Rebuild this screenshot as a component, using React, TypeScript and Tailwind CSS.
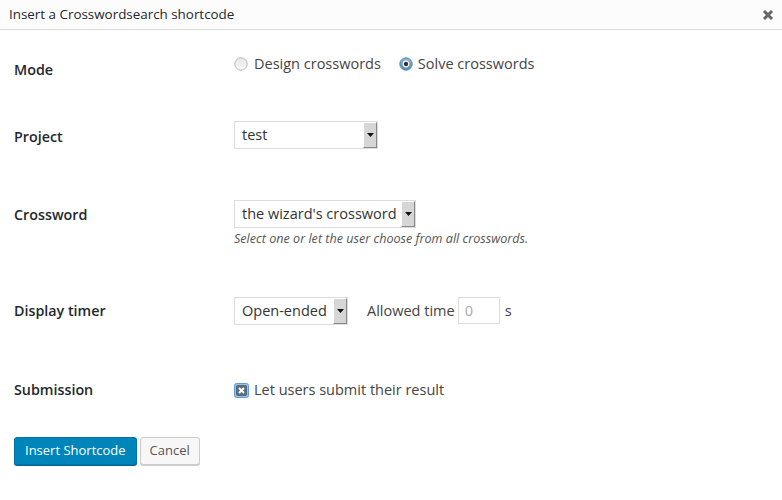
import React from "react";

const font = { fontFamily: '"Open Sans", "Liberation Sans", sans-serif' };

function Radio({ checked }: { checked?: boolean }) {
  return (
    <svg width="14" height="14" viewBox="0 0 14 14" className="shrink-0">
      <defs>
        <linearGradient id={checked ? "rc" : "ru"} x1="0" y1="0" x2="0" y2="1">
          <stop offset="0" stopColor={checked ? "#8fb6d0" : "#e6e6e6"} />
          <stop offset="1" stopColor={checked ? "#4f8db5" : "#fafafa"} />
        </linearGradient>
      </defs>
      <circle cx="7" cy="7" r="6.2" fill={`url(#${checked ? "rc" : "ru"})`} stroke={checked ? "#5a88a8" : "#b4b9be"} strokeWidth="1" />
      {checked && (
        <>
          <circle cx="7" cy="7" r="3.4" fill="#ffffff" />
          <circle cx="7" cy="7" r="2.2" fill="#333" />
        </>
      )}
    </svg>
  );
}

function Select({ value, width }: { value: string; width: string }) {
  return (
    <div className={`flex h-[28px] border border-[#dddddd] bg-white ${width}`}>
      <div className="flex-1 flex items-center pl-[7px] text-[14.5px] text-[#333] whitespace-nowrap overflow-hidden">{value}</div>
      <div className="w-[14px] flex items-center justify-center bg-[#d6d6d6] border-l border-t border-l-white border-t-white border-r border-b border-r-[#888] border-b-[#888]">
        <svg width="7" height="4" viewBox="0 0 7 4">
          <path d="M0 0h7L3.5 4z" fill="#111" />
        </svg>
      </div>
    </div>
  );
}

function Check() {
  return (
    <svg width="15" height="15" viewBox="0 0 15 15" className="shrink-0">
      <rect x="0.5" y="0.5" width="14" height="14" rx="2" fill="#9fc3dc" stroke="#5b9dd9" />
      <rect x="2.5" y="2.5" width="10" height="10" rx="1" fill="#5d6f7e" stroke="#4a5a68" strokeWidth="0.8" />
      <path d="M5 5l5 5M10 5l-5 5" stroke="#fff" strokeWidth="1.8" />
    </svg>
  );
}

export default function App() {
  return (
    <div className="w-[782px] h-[500px] bg-white text-[#444]" style={font}>
      <div className="h-[30px] flex items-center justify-between pl-[9px] pr-[8px] bg-[#fcfcfc] border-b border-[#dddddd]">
        <span className="text-[13.4px] text-[#23282d]">Insert a Crosswordsearch shortcode</span>
        <svg width="12" height="12" viewBox="0 0 12 12">
          <path d="M2 2l8 8M10 2l-8 8" stroke="#666" strokeWidth="3" />
        </svg>
      </div>

      <div className="pl-[14px] pt-[23px]">
        <div className="flex items-start h-[68px]">
          <div className="w-[220px] pt-[7px] text-[14.3px] leading-[20px] font-semibold text-[#23282d]">Mode</div>
          <div className="flex items-center h-[20px] mt-[1px] text-[14.5px]">
            <Radio />
            <span className="ml-[6px]">Design crosswords</span>
            <span className="ml-[18px]"><Radio checked /></span>
            <span className="ml-[5px]">Solve crosswords</span>
          </div>
        </div>

        <div className="flex items-start h-[79px]">
          <div className="w-[220px] pt-[6px] text-[14.3px] leading-[20px] font-semibold text-[#23282d]">Project</div>
          <Select value="test" width="w-[144px]" />
        </div>

        <div className="flex items-start h-[96px]">
          <div className="w-[220px] pt-[5px] text-[14.3px] leading-[20px] font-semibold text-[#23282d]">Crossword</div>
          <div className="flex flex-col">
            <Select value="the wizard's crossword" width="w-[182px]" />
            <div className="mt-[3px] text-[12.6px] leading-[16px] italic text-[#555]">Select one or let the user choose from all crosswords.</div>
          </div>
        </div>

        <div className="flex items-start h-[84px]">
          <div className="w-[220px] pt-[5px] text-[14.3px] leading-[20px] font-semibold text-[#23282d]">Display timer</div>
          <div className="flex items-center text-[14.5px]">
            <div className="mt-[1px]"><Select value="Open-ended" width="w-[114px]" /></div>
            <span className="ml-[19px]">Allowed time</span>
            <div className="ml-[3px] w-[42px] h-[27px] border border-[#dddddd] flex items-center pl-[6px] text-[#aaa]">0</div>
            <span className="ml-[5px]">s</span>
          </div>
        </div>

        <div className="flex items-start h-[57px]">
          <div className="w-[220px] text-[14.3px] leading-[20px] font-semibold text-[#23282d]">Submission</div>
          <div className="flex items-center h-[20px] text-[14.5px]">
            <Check />
            <span className="ml-[5px]">Let users submit their result</span>
          </div>
        </div>

        <div className="flex gap-[3px]">
          <button className="h-[28px] px-[10px] text-[13px] text-white bg-[#0085ba] border border-[#0073aa] rounded-[3px] shadow-[0_1px_0_#006799]">Insert Shortcode</button>
          <button className="h-[28px] px-[9px] text-[13px] text-[#555] bg-[#f7f7f7] border border-[#cccccc] rounded-[3px] shadow-[0_1px_0_#cccccc]">Cancel</button>
        </div>
      </div>
    </div>
  );
}
